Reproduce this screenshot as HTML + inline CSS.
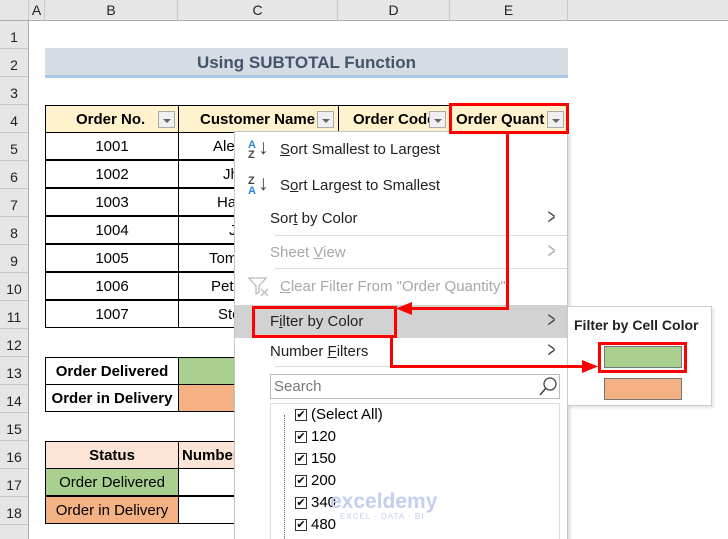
<!DOCTYPE html>
<html><head><style>
*{margin:0;padding:0;box-sizing:border-box}
html,body{width:728px;height:539px;overflow:hidden}
body{background:#fff;font-family:"Liberation Sans",Calibri,sans-serif;position:relative}
.a{position:absolute}
.ch{top:0;height:21px;background:#e6e6e6;border-right:1px solid #c8c8c8;border-bottom:1px solid #ababab;font-size:14px;text-align:center;line-height:20px;color:#222}
.rh{left:0;width:29px;height:28px;background:#e6e6e6;border-bottom:1px solid #c8c8c8;border-right:1px solid #ababab;font-size:14px;text-align:center;line-height:32px;color:#222}
.c{border:1px solid #000;font-size:15px;text-align:center;line-height:27px;height:28px;overflow:hidden;white-space:nowrap}
.b{font-weight:bold;font-size:15px}
.dd{width:17px;height:17px;border:1px solid #aaa;background:#f0f0f0;top:6px}
.dd:after{content:"";position:absolute;left:4px;top:7px;border:4px solid transparent;border-top:4px solid #666;border-bottom:0}
.mi{left:270px;font-size:15px;color:#222}
.gr{color:#a8a8a8}
.red{background:#f00}
.cb{width:12px;height:12px;border:1px solid #333;background:#fff;font-size:11px;line-height:10px;text-align:center}
.ch2{font-size:22px;color:#444;transform:scaleX(.6)}
</style></head><body>
<div class="a ch" style="left:0;width:29px"></div>
<div class="a ch" style="left:29px;width:16px">A</div>
<div class="a ch" style="left:45px;width:133px">B</div>
<div class="a ch" style="left:178px;width:160px">C</div>
<div class="a ch" style="left:338px;width:112px">D</div>
<div class="a ch" style="left:450px;width:118px">E</div>
<div class="a ch" style="left:568px;width:160px;border-right:0"></div>
<div class="a rh" style="top:21px">1</div><div class="a rh" style="top:49px">2</div><div class="a rh" style="top:77px">3</div><div class="a rh" style="top:105px">4</div><div class="a rh" style="top:133px">5</div><div class="a rh" style="top:161px">6</div><div class="a rh" style="top:189px">7</div><div class="a rh" style="top:217px">8</div><div class="a rh" style="top:245px">9</div><div class="a rh" style="top:273px">10</div><div class="a rh" style="top:301px">11</div><div class="a rh" style="top:329px">12</div><div class="a rh" style="top:357px">13</div><div class="a rh" style="top:385px">14</div><div class="a rh" style="top:413px">15</div><div class="a rh" style="top:441px">16</div><div class="a rh" style="top:469px">17</div><div class="a rh" style="top:497px">18</div><div class="a rh" style="top:525px"></div>
<div class="a" style="left:45px;top:48px;width:523px;height:30px;background:#d6dce4;border-bottom:3px solid #a9c6e8;text-align:center;font-weight:bold;font-size:17px;line-height:29px;color:#44546a">Using SUBTOTAL Function</div>
<div class="a c b" style="left:45px;top:105px;width:134px;background:#fff2cc;text-align:left;padding-left:30px">Order No.</div>
<div class="a dd" style="left:158px;top:111px"></div>
<div class="a c b" style="left:178px;top:105px;width:161px;background:#fff2cc;text-align:left;padding-left:21px">Customer Name</div>
<div class="a dd" style="left:317px;top:111px"></div>
<div class="a c b" style="left:338px;top:105px;width:113px;background:#fff2cc;text-align:left;padding-left:14px">Order Code</div>
<div class="a dd" style="left:429px;top:111px"></div>
<div class="a c b" style="left:450px;top:105px;width:118px;background:#fff2cc;text-align:left;padding-left:5px">Order Quant</div>
<div class="a dd" style="left:547px;top:111px"></div>
<div class="a c" style="left:45px;top:132px;width:134px">1001</div><div class="a c" style="left:178px;top:132px;width:161px;text-align:left;padding-left:34px">Alex</div>
<div class="a c" style="left:45px;top:160px;width:134px">1002</div><div class="a c" style="left:178px;top:160px;width:161px;text-align:left;padding-left:44px">Jhon</div>
<div class="a c" style="left:45px;top:188px;width:134px">1003</div><div class="a c" style="left:178px;top:188px;width:161px;text-align:left;padding-left:38px">Harry</div>
<div class="a c" style="left:45px;top:216px;width:134px">1004</div><div class="a c" style="left:178px;top:216px;width:161px;text-align:left;padding-left:50px">Jack</div>
<div class="a c" style="left:45px;top:244px;width:134px">1005</div><div class="a c" style="left:178px;top:244px;width:161px;text-align:left;padding-left:30px">Tommy</div>
<div class="a c" style="left:45px;top:272px;width:134px">1006</div><div class="a c" style="left:178px;top:272px;width:161px;text-align:left;padding-left:32px">Peter</div>
<div class="a c" style="left:45px;top:300px;width:134px">1007</div><div class="a c" style="left:178px;top:300px;width:161px;text-align:left;padding-left:39px">Steve</div>
<div class="a" style="left:567px;top:132px;width:1px;height:196px;background:#000"></div>
<div class="a c b" style="left:45px;top:357px;width:134px">Order Delivered</div><div class="a c" style="left:178px;top:357px;width:80px;background:#a9d08e"></div>
<div class="a c b" style="left:45px;top:384px;width:134px">Order in Delivery</div><div class="a c" style="left:178px;top:384px;width:80px;background:#f4b183"></div>
<div class="a c b" style="left:45px;top:441px;width:134px;background:#fce4d6">Status</div><div class="a c b" style="left:178px;top:441px;width:80px;background:#fce4d6;text-align:left;padding-left:3px">Number</div>
<div class="a c" style="left:45px;top:468px;width:134px;background:#a9d08e">Order Delivered</div><div class="a c" style="left:178px;top:468px;width:80px"></div>
<div class="a c" style="left:45px;top:496px;width:134px;background:#f4b183">Order in Delivery</div><div class="a c" style="left:178px;top:496px;width:80px"></div>
<!-- menu -->
<div class="a" style="left:234px;top:131px;width:334px;height:410px;background:#fff;border:1px solid #c6c6c6;box-shadow:2px 2px 3px rgba(0,0,0,.15)"></div>
<div class="a" style="left:235px;top:305px;width:332px;height:33px;background:#d2d2d2"></div>
<div class="a" style="left:248px;top:140px;font-size:11px;line-height:10px;font-weight:bold"><span style="color:#2a8ad8">A</span><br><span style="color:#444">Z</span></div>
<div class="a" style="left:258px;top:136px;font-size:21px;color:#444">↓</div>
<div class="a" style="left:248px;top:176px;font-size:11px;line-height:10px;font-weight:bold"><span style="color:#444">Z</span><br><span style="color:#2a8ad8">A</span></div>
<div class="a" style="left:258px;top:172px;font-size:21px;color:#444">↓</div>
<div class="a mi" style="left:280px;top:141px"><u>S</u>ort Smallest to Largest</div>
<div class="a mi" style="left:280px;top:177px">S<u>o</u>rt Largest to Smallest</div>
<div class="a mi" style="top:210px">Sor<u>t</u> by Color</div>
<div class="a mi gr" style="top:244px">Sheet <u>V</u>iew</div>
<div class="a mi gr" style="left:280px;top:278px"><u>C</u>lear Filter From "Order Quantity"</div>
<svg class="a" style="left:248px;top:276px" width="22" height="22"><path d="M1 2h17l-7 8v6l-3 2v-8z" fill="none" stroke="#bbb" stroke-width="1.3"/><path d="M13 13l7 7M20 13l-7 7" stroke="#bbb" stroke-width="1.3"/></svg>
<div class="a mi" style="top:313px">F<u>i</u>lter by Color</div>
<div class="a mi" style="top:343px">Number <u>F</u>ilters</div>
<div class="a ch2" style="left:545px;top:204px">&gt;</div>
<div class="a ch2" style="left:545px;top:238px;color:#aaa">&gt;</div>
<div class="a ch2" style="left:545px;top:307px">&gt;</div>
<div class="a ch2" style="left:545px;top:337px">&gt;</div>
<div class="a" style="left:275px;top:235px;width:292px;height:1px;background:#ddd"></div>
<div class="a" style="left:275px;top:268px;width:292px;height:1px;background:#ddd"></div>
<div class="a" style="left:275px;top:366px;width:292px;height:1px;background:#ddd"></div>
<div class="a" style="left:270px;top:374px;width:290px;height:25px;border:1px solid #bbb;font-size:15px;color:#777;padding-left:3px;line-height:23px">Search</div>
<svg class="a" style="left:538px;top:376px" width="20" height="20"><circle cx="12" cy="8" r="6" fill="none" stroke="#444" stroke-width="1.3"/><path d="M8 12l-6 7" stroke="#444" stroke-width="1.5"/></svg>
<div class="a" style="left:270px;top:403px;width:290px;height:140px;border:1px solid #ddd"></div>
<div class="a" style="left:284px;top:415px;width:1px;height:124px;border-left:1px dotted #666"></div>
<div class="a cb" style="left:295px;top:409px">✔</div><div class="a" style="left:311px;top:406px;font-size:15px">(Select All)</div>
<div class="a cb" style="left:295px;top:431px">✔</div><div class="a" style="left:311px;top:428px;font-size:15px">120</div>
<div class="a cb" style="left:295px;top:453px">✔</div><div class="a" style="left:311px;top:450px;font-size:15px">150</div>
<div class="a cb" style="left:295px;top:475px">✔</div><div class="a" style="left:311px;top:472px;font-size:15px">200</div>
<div class="a cb" style="left:295px;top:497px">✔</div><div class="a" style="left:311px;top:494px;font-size:15px">340</div>
<div class="a cb" style="left:295px;top:519px">✔</div><div class="a" style="left:311px;top:516px;font-size:15px">480</div>
<div class="a" style="left:330px;top:490px;font-size:21px;font-weight:bold;color:#c4cff0">exceldemy</div>
<div class="a" style="left:340px;top:512px;font-size:8px;color:#c4cff0;letter-spacing:1px">EXCEL · DATA · BI</div>
<div class="a" style="left:567px;top:306px;width:145px;height:100px;background:#fff;border:1px solid #ccc;box-shadow:2px 2px 3px rgba(0,0,0,.1)"></div>
<div class="a" style="left:574px;top:317px;font-size:14px;font-weight:bold;color:#222">Filter by Cell Color</div>
<div class="a" style="left:604px;top:346px;width:78px;height:22px;background:#a9d08e;border:1px solid #777"></div>
<div class="a" style="left:604px;top:378px;width:78px;height:22px;background:#f4b183;border:1px solid #777"></div>
<div class="a" style="left:449px;top:103px;width:120px;height:31px;border:3px solid #f00"></div>
<div class="a" style="left:252px;top:306px;width:145px;height:32px;border:3px solid #f00"></div>
<div class="a" style="left:598px;top:342px;width:89px;height:31px;border:3px solid #f00"></div>
<div class="a red" style="left:506px;top:133px;width:3px;height:177px"></div>
<div class="a red" style="left:410px;top:307px;width:99px;height:3px"></div>
<svg class="a" style="left:396px;top:302px" width="16" height="13"><path d="M0 6.5L16 0V13z" fill="#f00"/></svg>
<div class="a red" style="left:390px;top:337px;width:3px;height:31px"></div>
<div class="a red" style="left:390px;top:365px;width:194px;height:3px"></div>
<svg class="a" style="left:582px;top:360px" width="16" height="13"><path d="M16 6.5L0 0V13z" fill="#f00"/></svg>
</body></html>
